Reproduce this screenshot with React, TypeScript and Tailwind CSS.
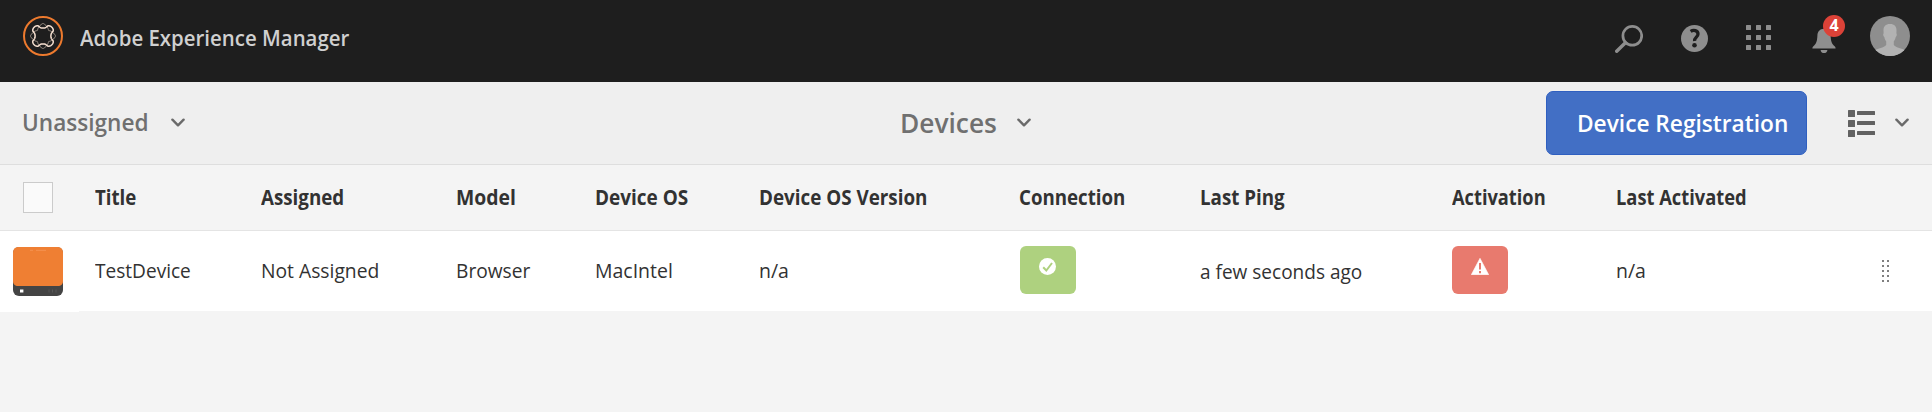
import type { ReactNode } from "react";

const columns = "grid grid-cols-[95px_166px_195px_139px_164px_260px_181px_252px_164px_200px_1fr] items-center";

function Chevron() {
  return (
    <svg className="block h-[10px] w-[14px] shrink-0" viewBox="0 0 14 10" fill="none" stroke="#6a6a6a" strokeWidth="2.4" strokeLinecap="round" strokeLinejoin="round">
      <path d="M1.4 1.7 L7 7.3 L12.6 1.7" />
    </svg>
  );
}

function Label({ className, children }: { className: string; children: ReactNode }) {
  return <span className={`inline-block origin-left whitespace-nowrap ${className}`}>{children}</span>;
}

// Closed wave around the logo's centre; amplitude sets how far its four lobes swing.
function wave(amplitude: number) {
  const points = Array.from({ length: 96 }, (_, i) => {
    const angle = (i / 96) * Math.PI * 2;
    const radius = 10.2 + amplitude * Math.cos(4 * angle);
    const swing = angle + (amplitude < 0 ? 0.14 : -0.14) * Math.sin(8 * angle) * 0.5;
    return `${(20 + radius * Math.cos(swing)).toFixed(2)} ${(20 + radius * Math.sin(swing)).toFixed(2)}`;
  });
  return `M${points.join(" L")} Z`;
}

function Logo() {
  return (
    <svg className="block size-10" viewBox="0 0 40 40" fill="none">
      <circle cx="20" cy="20" r="19" stroke="#ed7a2e" strokeWidth="2" />
      <path d={wave(2.3)} stroke="#a3978c" strokeWidth="1" />
      <path d={wave(-2.3)} stroke="#f6e0d0" strokeWidth="1.5" />
    </svg>
  );
}

function SearchIcon() {
  return (
    <svg className="block size-7" viewBox="0 0 28 28" fill="none" stroke="#8e8e8e">
      <circle cx="17.3" cy="10.8" r="9.4" strokeWidth="2.7" />
      <path d="M10.4 17.7 L1.7 26.3" strokeWidth="3.4" strokeLinecap="round" />
    </svg>
  );
}

function HelpIcon() {
  return (
    <svg className="block size-[27px]" viewBox="0 0 27 27">
      <circle cx="13.5" cy="13.5" r="13.5" fill="#8e8e8e" />
      <path d="M9.6 6.3 C12.5 4.5 17 5.2 17 8.9 C17 12 13.2 12.4 13.6 16" fill="none" stroke="#1e1e1e" strokeWidth="3.3" />
      <circle cx="13.5" cy="20.3" r="2.3" fill="#1e1e1e" />
    </svg>
  );
}

function AppsIcon() {
  return (
    <div className="grid grid-cols-3 gap-[5px]">
      {Array.from({ length: 9 }, (_, i) => (
        <span key={i} className="size-[5px] rounded-[0.5px] bg-[#8e8e8e]" />
      ))}
    </div>
  );
}

function BellIcon() {
  return (
    <svg className="block h-[26px] w-6" viewBox="0 0 24 26" fill="#8e8e8e">
      <path d="M12 0.8 C8 0.8 5.6 3.6 5.4 7.5 C5.1 13.4 4.4 15.6 1.4 18.2 C0.7 18.8 0.4 19.4 0.4 20.5 H23.6 C23.6 19.4 23.3 18.8 22.6 18.2 C19.6 15.6 18.9 13.4 18.6 7.5 C18.4 3.6 16 0.8 12 0.8 Z" />
      <path d="M8.6 22 H15.4 C15.4 23.9 13.9 25.1 12 25.1 C10.1 25.1 8.6 23.9 8.6 22 Z" />
    </svg>
  );
}

function Avatar() {
  return (
    <svg className="block size-10" viewBox="0 0 40 40">
      <defs>
        <clipPath id="avatar">
          <circle cx="20" cy="20" r="20" />
        </clipPath>
      </defs>
      <g clipPath="url(#avatar)">
        <rect width="40" height="40" fill="#8e8e8e" />
        <path
          d="M20 8 C15.5 8 13.4 10.6 13.5 14.5 L13.6 17.5 C12.8 17.8 13.2 20.4 14.3 21 C14.6 23 15.4 24.2 16.2 25.2 V29 C14.5 31.5 9 32 5.5 34 V40 H34.5 V34 C31 32 25.5 31.5 23.8 29 V25.2 C24.6 24.2 25.4 23 25.7 21 C26.8 20.4 27.2 17.8 26.4 17.5 L26.5 14.5 C26.6 10.6 24.5 8 20 8 Z"
          fill="#b2b2b2"
        />
      </g>
    </svg>
  );
}

function ListIcon() {
  return (
    <div className="flex flex-col gap-[3px]">
      {[0, 1, 2].map((i) => (
        <div key={i} className="flex items-center gap-0.5">
          <span className="size-[7px] rounded-[0.5px] bg-[#616161]" />
          <span className="h-[4px] w-[18px] rounded-[0.5px] bg-[#616161]" />
        </div>
      ))}
    </div>
  );
}

function DeviceIcon() {
  return (
    <svg className="block h-[49px] w-[50px]" viewBox="0 0 50 49">
      <rect width="50" height="49" rx="6" fill="#444444" />
      <path d="M0 6 C0 2 2 0 6 0 H44 C48 0 50 2 50 6 V34 C50 37.5 48 39 45 39 H5 C2 39 0 37.5 0 34 Z" fill="#ef7f33" />
      <path d="M17 3.3 h3 M23 3.3 h10" stroke="#f59350" />
      <rect x="7" y="42.5" width="3.4" height="3" fill="#ffffff" />
      <path d="M36 42.5 v3 M39.5 42.5 v3 M43 42.5 v3" stroke="#575757" />
    </svg>
  );
}

const headings = [
  { text: "Title", scale: "scale-x-[0.910]" },
  { text: "Assigned", scale: "scale-x-[0.915]" },
  { text: "Model", scale: "scale-x-[0.945]" },
  { text: "Device OS", scale: "scale-x-[0.925]" },
  { text: "Device OS Version", scale: "scale-x-[0.918]" },
  { text: "Connection", scale: "scale-x-[0.912]" },
  { text: "Last Ping", scale: "scale-x-[0.915]" },
  { text: "Activation", scale: "scale-x-[0.890]" },
  { text: "Last Activated", scale: "scale-x-[0.893]" },
];

export default function App() {
  return (
    <div className="flex h-[412px] w-[1932px] flex-col overflow-hidden bg-[#f4f4f4] font-['Open_Sans',sans-serif] text-[20.5px] leading-7 text-[#323232]">
      <header className="flex h-[82px] shrink-0 items-start bg-[#1e1e1e] pt-4 pl-[23px]">
        <Logo />
        <Label className="mt-[7px] ml-[17px] w-[270px] scale-x-[0.928] text-[22px] font-semibold text-[#d0d0d0]">Adobe Experience Manager</Label>
        <div className="ml-auto flex items-start pr-[22px]">
          <div className="mt-[9px]"><SearchIcon /></div>
          <div className="mt-[9px] ml-[38px]"><HelpIcon /></div>
          <div className="mt-[9px] ml-[38px]"><AppsIcon /></div>
          <div className="relative mt-3 ml-[41px]">
            <BellIcon />
            <span className="absolute -top-[13.5px] left-[11px] flex size-[22px] items-center justify-center rounded-full bg-[#dc4238] pb-px text-[16px] leading-none font-bold text-white">4</span>
          </div>
          <div className="ml-[34px]"><Avatar /></div>
        </div>
      </header>

      <div className="grid h-[83px] shrink-0 grid-cols-[900px_1fr_auto] items-center border-b border-[#dedede] bg-[#efefef] font-semibold text-[#707070]">
        <div className="flex items-center pl-[22px]">
          <Label className="mb-0.5 w-[149px] scale-x-[0.942] text-[24px]">Unassigned</Label>
          <Chevron />
        </div>
        <div className="flex items-center">
          <Label className="w-[117px] scale-x-[0.975] text-[27px]">Devices</Label>
          <Chevron />
        </div>
        <div className="flex items-center pr-[23px]">
          <button className="flex h-16 w-[261px] items-center rounded-[7px] border border-[#2f5fc0] bg-[#426fc5] pl-[30px] text-white">
            <Label className="scale-x-[0.945] text-[24px]">Device Registration</Label>
          </button>
          <div className="ml-[41px]"><ListIcon /></div>
          <div className="ml-5"><Chevron /></div>
        </div>
      </div>

      <div className={`${columns} h-[66px] shrink-0 border-b border-[#e4e4e4] font-bold`}>
        <div className="pl-[23px]">
          <div className="h-[31px] w-[30px] border border-[#cbcbcb] bg-[#fafafa]" />
        </div>
        {headings.map((h) => (
          <Label key={h.text} className={`mb-0.5 ${h.scale}`}>{h.text}</Label>
        ))}
      </div>

      <div className={`${columns} h-20 shrink-0 bg-white`}>
        <div className="h-[81px] w-[79px] self-start bg-white pt-4 pl-[13px]">
          <DeviceIcon />
        </div>
        <Label className="mb-[3px] scale-x-[0.930]">TestDevice</Label>
        <Label className="mb-[3px] scale-x-[0.940]">Not Assigned</Label>
        <Label className="mb-[3px] scale-x-[0.935]">Browser</Label>
        <Label className="mb-[3px] scale-x-[0.950]">MacIntel</Label>
        <Label className="mb-[3px] scale-x-[0.950]">n/a</Label>
        <div className="mt-[15px] ml-px flex h-12 w-14 justify-center self-start rounded-[6px] bg-[#aed17f] pt-3 pr-px">
          <svg className="block size-[17px]" viewBox="0 0 17 17">
            <circle cx="8.5" cy="8.5" r="8.5" fill="#ffffff" />
            <path d="M4.2 9.3 L7.3 12.5 L13 5" fill="none" stroke="#aed17f" strokeWidth="2" />
          </svg>
        </div>
        <Label className="mb-px scale-x-[0.928]">a few seconds ago</Label>
        <div className="mt-[15px] flex h-12 w-14 justify-center self-start rounded-[6px] bg-[#e87a6e] pt-3">
          <svg className="block h-[17px] w-[18px]" viewBox="0 0 18 17">
            <path d="M9 0.3 L17.7 16.7 H0.3 Z" fill="#ffffff" stroke="#ffffff" strokeWidth="0.6" strokeLinejoin="round" />
            <path d="M9 5 V11.5 M9 13 V15.2" stroke="#e87a6e" strokeWidth="2" />
          </svg>
        </div>
        <Label className="mb-[3px] scale-x-[0.950]">n/a</Label>
        <div className="mr-[43px] mb-px grid w-[7px] grid-cols-2 gap-[3px] justify-self-end">
          {Array.from({ length: 10 }, (_, i) => (
            <span key={i} className="size-0.5 rounded-full bg-[#555555]" />
          ))}
        </div>
      </div>
    </div>
  );
}
